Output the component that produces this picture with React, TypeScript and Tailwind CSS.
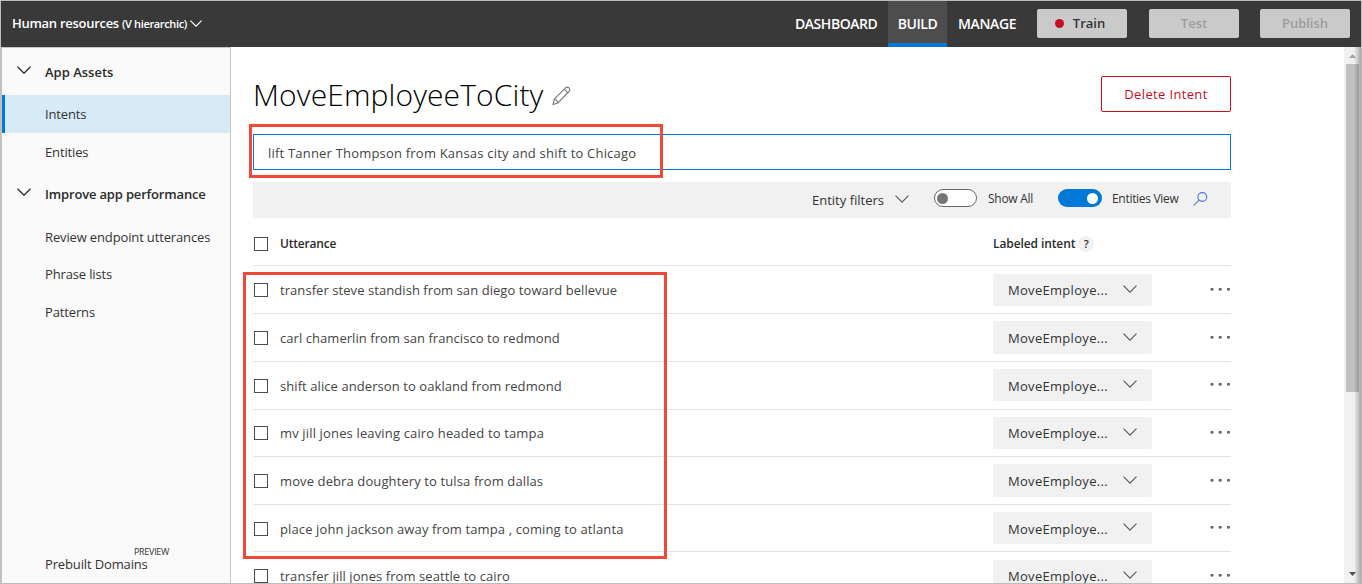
import type { ReactNode } from "react";

function Chevron({ className = "", width = 14, height = 8, stroke = 1.1 }: { className?: string; width?: number; height?: number; stroke?: number }) {
  return (
    <svg className={`shrink-0 ${className}`} width={width} height={height} viewBox="0 0 14 8" fill="none" stroke="currentColor" strokeWidth={stroke}>
      <path d="M0.5 0.7 7 7.2 13.5 0.7" />
    </svg>
  );
}

function Checkbox() {
  return <span className="block size-3.5 shrink-0 border border-[#4d4d4d] bg-white" />;
}

function NavGroup({ label, className }: { label: string; className: string }) {
  return (
    <div className={`flex pl-[15px] text-[13px] leading-5 font-semibold text-[#2a2a2a] ${className}`}>
      <Chevron className="mt-[4px] mr-[14px]" stroke={1.3} />
      {label}
    </div>
  );
}

function NavItem({ label, className }: { label: string; className: string }) {
  return <div className={`pl-[43px] text-[13px] leading-5 tracking-[-0.14px] text-[#333] ${className}`}>{label}</div>;
}

function HeaderButton({ children, className }: { children: ReactNode; className: string }) {
  return (
    <button className={`-mt-px flex h-[29px] w-[90px] items-center justify-center rounded-[2px] bg-[#cacaca] text-[13px] font-semibold ${className}`}>
      {children}
    </button>
  );
}

const rows = [
  { text: "transfer steve standish from san diego toward bellevue", track: "tracking-[0.065px]", row: "h-12", button: "mt-2 h-8", label: "mt-[6px]", dots: "mt-[22px]", chev: "mt-[11px]" },
  { text: "carl chamerlin from san francisco to redmond", track: "tracking-[0.055px]", row: "h-12", button: "mt-[7px] h-[33px]", label: "mt-[7px]", dots: "mt-[22px]", chev: "mt-3" },
  { text: "shift alice anderson to oakland from redmond", track: "tracking-[0.075px]", row: "h-12", button: "mt-[7px] h-8", label: "mt-[7px]", dots: "mt-[21px]", chev: "mt-[11px]" },
  { text: "mv jill jones leaving cairo headed to tampa", track: "tracking-[0.15px]", row: "h-[47px]", button: "mt-[7px] h-8", label: "mt-[6px]", dots: "mt-[21px]", chev: "mt-[11px]" },
  { text: "move debra doughtery to tulsa from dallas", track: "tracking-[0.11px]", row: "h-12", button: "mt-[7px] h-[33px]", label: "mt-[7px]", dots: "mt-[22px]", chev: "mt-3" },
  { text: "place john jackson away from tampa , coming to atlanta", track: "tracking-[0.12px]", row: "h-[47px]", button: "mt-[7px] h-8", label: "mt-[7px]", dots: "mt-[21px]", chev: "mt-[11px]" },
  { text: "transfer jill jones from seattle to cairo", track: "tracking-[0.08px]", row: "h-12", button: "mt-2 h-8", label: "mt-[6px]", dots: "mt-[22px]", chev: "mt-[11px]" },
];

function UtteranceRow({ r, i }: { r: (typeof rows)[number]; i: number }) {
  const raised = i === 3;
  return (
    <div className={`flex shrink-0 items-start border-b border-[#e3e3e3] ${r.row}`}>
      <div className={raised ? "ml-px mt-[16px]" : "ml-px mt-[17px]"}>
        <Checkbox />
      </div>
      <div className={`ml-3 w-[713px] text-[13px] leading-5 text-[#444] ${r.track} ${raised ? "mt-[13px]" : "mt-[14px]"}`}>{r.text}</div>
      <div className={`flex w-[159px] items-start rounded-[2px] bg-[#f1f1f1] pl-[15px] text-[#333] ${r.button}`}>
        <span className={`w-[115px] text-[13px] leading-5 tracking-[0.3px] ${r.label}`}>MoveEmploye...</span>
        <Chevron className={`text-[#555] ${r.chev}`} />
      </div>
      <svg className={`ml-[58px] shrink-0 text-[#666] ${r.dots}`} width="21" height="3" fill="currentColor">
        <circle cx="2" cy="1.2" r="1.5" />
        <circle cx="10.2" cy="1.2" r="1.5" />
        <circle cx="18.5" cy="1.2" r="1.5" />
      </svg>
    </div>
  );
}

export default function App() {
  return (
    <div className="relative flex h-[584px] w-[1362px] flex-col overflow-hidden border border-[#bdbdbd] bg-white font-['Open_Sans',sans-serif]">
      <header className="flex h-[46px] shrink-0 items-center bg-[#393939] pl-[11px] text-white">
        <div className="flex items-center whitespace-nowrap">
          <span className="text-[13px] font-semibold tracking-[-0.28px]">Human resources</span>
          <span className="ml-[3px] text-[11px] font-semibold tracking-[-0.35px]">(V hierarchic)</span>
          <Chevron className="ml-[3px] -mt-0.5" width={12} height={7} stroke={1.3} />
        </div>
        <nav className="ml-auto flex h-full items-center text-sm font-semibold tracking-[-0.45px]">
          <span className="w-[93px]">DASHBOARD</span>
          <span className="flex h-full w-[59px] items-center justify-center border-b-4 border-[#0078d7] bg-[#4d4d4d] pt-1">BUILD</span>
          <span className="ml-[11px] w-[79px] tracking-[-0.35px]">MANAGE</span>
        </nav>
        <HeaderButton className="pr-[4px] text-[#333]">
          <span className="mr-[9px] size-[9px] rounded-full bg-[#c50f1f]" />
          Train
        </HeaderButton>
        <HeaderButton className="ml-[22px] text-[#9d9d9d]">Test</HeaderButton>
        <HeaderButton className="ml-[21px] mr-[11px] text-[#9d9d9d]">Publish</HeaderButton>
      </header>

      <div className="flex min-h-0 flex-1">
        <aside className="flex w-[230px] shrink-0 flex-col border-t border-r border-l border-[#c6c6c6] bg-[#fafafa]">
          <NavGroup label="App Assets" className="mt-[14px]" />
          <div className="mt-[13px] flex h-[38px] items-center border-l-[3px] border-[#0078d7] bg-[#d6ebf6]">
            <NavItem label="Intents" className="-ml-[3px]" />
          </div>
          <NavItem label="Entities" className="mt-[9px]" />
          <NavGroup label="Improve app performance" className="mt-[22px] tracking-[-0.17px]" />
          <NavItem label="Review endpoint utterances" className="mt-[23px]" />
          <NavItem label="Phrase lists" className="mt-[17px]" />
          <NavItem label="Patterns" className="mt-[18px]" />
          <div className="mt-auto mb-[9px]">
            <div className="-mb-1 pl-[132px] text-[9px] leading-3 tracking-[-0.3px] text-[#333]">PREVIEW</div>
            <NavItem label="Prebuilt Domains" className="" />
          </div>
        </aside>

        <main className="ml-[22px] flex w-[978px] shrink-0 flex-col">
          <div className="flex h-[87px] shrink-0 items-start">
            <h1 className="mt-[27px] text-[30px] leading-[42px] font-light tracking-[0.12px] text-black">MoveEmployeeToCity</h1>
            <svg className="mt-[39px] ml-[9px] text-[#777]" width="19" height="20" viewBox="0 0 19 20" fill="none" stroke="currentColor" strokeWidth="1.1" strokeLinejoin="round">
              <path d="M1 18.6 2.3 13.2 13.5 1.9Q15.2.4 17 1.9 18.6 3.6 17 5.5L5.9 16.9ZM12.2 3.2 15.8 6.8M2.3 13.2Q5 13.8 5.9 16.9" />
            </svg>
            <button className="mt-[29px] ml-auto flex h-9 w-[130px] items-center justify-center rounded-[2px] border border-[#c50f1f] pt-px text-[13px] font-medium tracking-[0.35px] text-[#c50f1f]">
              Delete Intent
            </button>
          </div>

          <div className="relative flex h-9 shrink-0 items-center border border-[#0078d7] pt-[3px] pl-[14px] text-[13px] tracking-[0.2px] text-[#444]">
            lift Tanner Thompson from Kansas city and shift to Chicago
            <span className="absolute -top-[11px] -left-[5px] h-[54px] w-[414px] border-3 border-[#f04937]" />
          </div>

          <div className="mt-3 flex h-9 shrink-0 items-center bg-[#f1f1f1] pl-[559px] text-[#333]">
            <span className="w-[83px] pt-px text-[13px]">Entity filters</span>
            <Chevron className="-mt-[3px] text-[#555]" />
            <span className="-mt-1 ml-[25px] flex h-[18px] w-[43px] items-center rounded-full border border-[#666] bg-white pl-0.5">
              <span className="size-[11px] rounded-full bg-[#767676]" />
            </span>
            <span className="-mt-0.5 ml-[11px] w-[70px] text-xs tracking-[-0.27px]">Show All</span>
            <span className="-mt-1 flex h-[18px] w-11 items-center justify-end rounded-full bg-[#0078d7] pr-1">
              <span className="size-[11px] rounded-full bg-white" />
            </span>
            <span className="-mt-0.5 ml-[10px] w-[81px] text-xs tracking-[-0.3px] whitespace-nowrap">Entities View</span>
            <svg className="-mt-0.5 shrink-0 text-[#4a78dc]" width="15" height="14" viewBox="0 0 15 14" fill="none" stroke="currentColor" strokeWidth="1.1">
              <circle cx="9.3" cy="5" r="4.4" />
              <path d="M6.1 8.1 0.7 13.4" />
            </svg>
          </div>

          <div className="flex h-12 shrink-0 items-start border-b border-[#e3e3e3] text-xs leading-5 font-semibold text-[#2a2a2a]">
            <div className="mt-[19px] ml-px">
              <Checkbox />
            </div>
            <div className="mt-4 ml-3 w-[713px] tracking-[-0.2px]">Utterance</div>
            <div className="mt-4 tracking-[-0.1px]">Labeled intent</div>
            <div className="mt-[18px] ml-[3px] flex size-4 items-center justify-center rounded-full bg-[#f1f1f1] text-[11px]">?</div>
          </div>

          <div className="relative flex min-h-0 flex-1 flex-col">
            <div className="flex min-h-0 flex-1 flex-col overflow-hidden">
              {rows.map((r, i) => (
                <UtteranceRow key={r.text} r={r} i={i} />
              ))}
            </div>
            <span className="absolute top-[6px] -left-[10px] h-[287px] w-[424px] border-3 border-[#f04937]" />
          </div>
        </main>

        <div className="-mr-px ml-auto flex w-[18px] shrink-0 flex-col items-center justify-between bg-[#f1f1f1] pr-0.5">
          <svg className="mt-[7px]" width="7" height="4">
            <path d="M0 4 3.5 0 7 4Z" fill="#a3a3a3" />
          </svg>
          <div className="-mt-px mb-auto ml-px h-[328px] w-[13px] translate-y-[7px] bg-[#c1c1c1]" />
          <svg className="mb-[7px]" width="7" height="4">
            <path d="M0 0 3.5 4 7 0Z" fill="#505050" />
          </svg>
        </div>
      </div>
      <div className="pointer-events-none absolute top-[46px] -right-px bottom-0 w-2 bg-linear-to-r from-transparent to-black/35" />
    </div>
  );
}
